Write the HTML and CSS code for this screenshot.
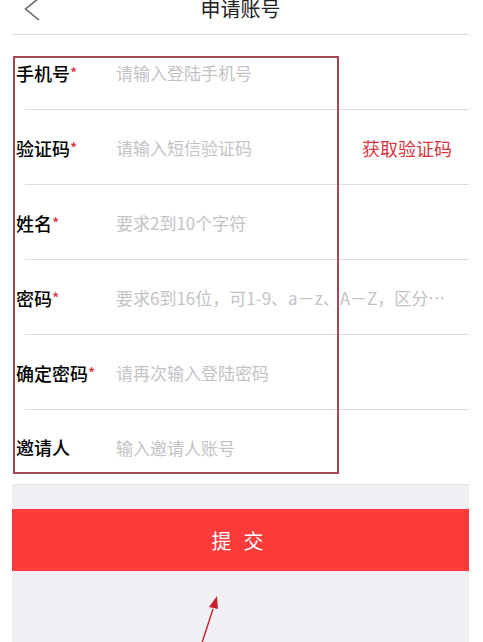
FILE: index.html
```html
<!DOCTYPE html>
<html lang="zh-CN">
<head>
  <meta charset="UTF-8" />
  <meta name="viewport" content="width=device-width, initial-scale=1" />
  <title>申请账号</title>
  <link rel="stylesheet" href="styles.css">
</head>
<body>
  <div class="page">
    <div class="topbar">
      <a class="back" href="#">
        <svg width="16" height="24" viewBox="0 0 16 24"><path d="M15 1 L1.5 12 L15 23" fill="none" stroke="#666" stroke-width="1.6" stroke-linejoin="miter" /></svg>
      </a>
      <h1>申请账号</h1>
      <span></span>
    </div>

    <form class="form" id="applyForm">
      <div class="row">
        <label>手机号<i>*</i></label>
        <input type="tel" placeholder="请输入登陆手机号" />
      </div>
      <div class="row">
        <label>验证码<i>*</i></label>
        <input type="text" placeholder="请输入短信验证码" />
        <a class="get-code" href="#">获取验证码</a>
      </div>
      <div class="row">
        <label>姓名<i>*</i></label>
        <input type="text" placeholder="要求2到10个字符" />
      </div>
      <div class="row">
        <label>密码<i>*</i></label>
        <input type="password" placeholder="要求6到16位，可1-9、a－z、A－Z，区分大小写" />
      </div>
      <div class="row">
        <label>确定密码<i>*</i></label>
        <input type="password" placeholder="请再次输入登陆密码" />
      </div>
      <div class="row last">
        <label>邀请人</label>
        <input type="text" placeholder="输入邀请人账号" />
      </div>
    </form>

    <div class="footer">
      <button class="submit" type="submit" form="applyForm">提交</button>
    </div>

    <!-- annotation marks from the screenshot -->
    <div class="mark-box"></div>
    <svg class="mark-arrow" width="40" height="60" viewBox="0 0 40 60">
      <line x1="9" y1="60" x2="23" y2="17" stroke="#c8202c" stroke-width="1.4" />
      <polygon points="27,4 19,15 28,17" fill="#c8202c" />
    </svg>
  </div>
</body>
</html>
```

FILE: styles.css
```css
body {
  margin: 0;
  font-family: "Noto Sans CJK SC", "Noto Sans", sans-serif;
  background: #fff;
  color: #111;
  overflow: hidden;
}

.page {
  position: relative;
  margin: 0 14px 0 12px;
  padding-top: 1px;
  overflow: hidden;
}

.topbar {
  height: 50px;
  margin-top: -17px;
  display: grid;
  grid-template-columns: 1fr auto 1fr;
  align-items: center;
  border-bottom: 1px solid #dedede;
}

.back {
  display: flex;
  padding-left: 12px;
}

.topbar h1 {
  margin: 0 0 2px 0;
  font-size: 20px;
  font-weight: normal;
  color: #222;
}

.form {
  margin: 0;
}

.row {
  height: 75px;
  display: flex;
  align-items: center;
  background: linear-gradient(#dedede, #dedede) no-repeat right bottom / calc(100% - 13px) 1px;
}

.row.last {
  background: none;
  height: 74px;
}

.row label {
  flex: none;
  width: 100px;
  padding-left: 4px;
  font-size: 18px;
  font-weight: 500;
  color: #000;
  white-space: nowrap;
}

.row label i {
  font-style: normal;
  color: #d8333f;
  font-size: 15px;
  vertical-align: 2px;
}

.row input {
  flex: 1;
  min-width: 0;
  border: none;
  outline: none;
  padding: 0;
  margin: 0 17px 0 0;
  font-family: inherit;
  font-size: 17px;
  color: #333;
  background: transparent;
  text-overflow: ellipsis;
}

.row input::placeholder {
  color: #c3c3c6;
}

.get-code {
  flex: none;
  margin-right: 17px;
  font-size: 18px;
  color: #d83640;
  text-decoration: none;
}

.footer {
  border-top: 1px solid #e3e3e8;
  background: #efeff4;
  padding-top: 24px;
  height: 133px;
}

.submit {
  display: block;
  width: 100%;
  height: 62px;
  border: none;
  background: #fc3b3b;
  color: #fff;
  font-family: inherit;
  font-size: 20px;
  letter-spacing: 12px;
  padding-left: 12px;
  cursor: pointer;
}

.mark-box {
  position: absolute;
  left: 1px;
  top: 56px;
  width: 322px;
  height: 414px;
  border: 2px solid #a64553;
  pointer-events: none;
}

.mark-arrow {
  position: absolute;
  left: 178px;
  top: 592px;
  pointer-events: none;
}
```
